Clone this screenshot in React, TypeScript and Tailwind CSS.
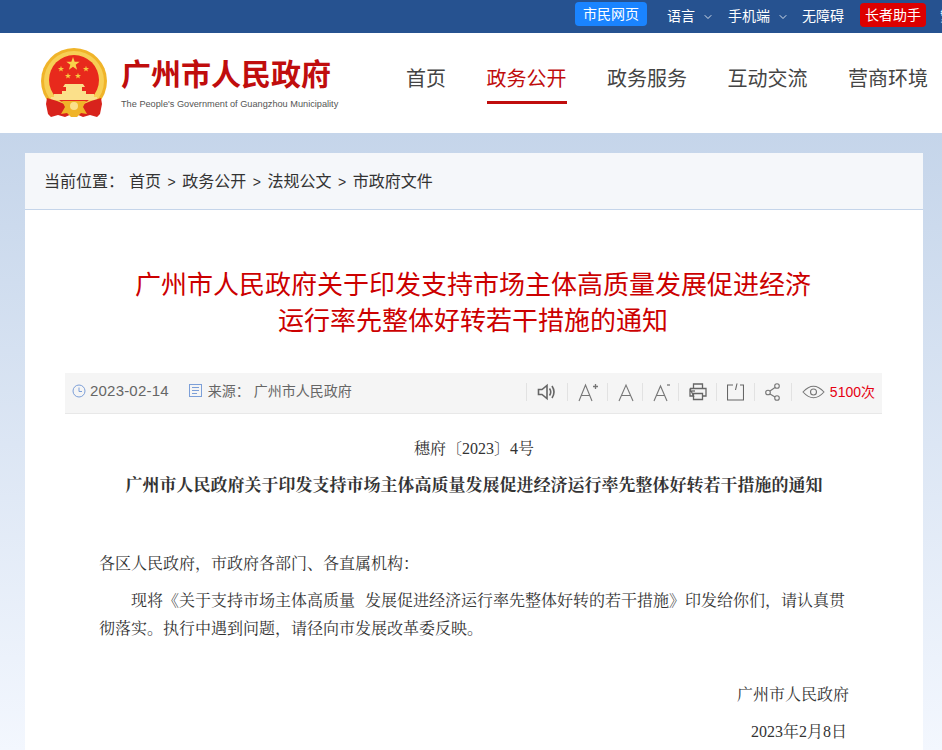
import React from "react";
import { ChevronDown } from "lucide-react";

const cjk = "font-['Liberation_Sans','Noto_Sans_CJK_SC',sans-serif]";
const song = "font-['Liberation_Serif','Noto_Serif_CJK_SC','Noto_Sans_CJK_SC',serif]";

function star(cx: number, cy: number, r: number) {
    const pts: string[] = [];
    for (let i = 0; i < 10; i++) {
        const rr = i % 2 === 0 ? r : r * 0.4;
        const a = (Math.PI / 5) * i - Math.PI / 2;
        pts.push(`${(cx + rr * Math.cos(a)).toFixed(2)},${(cy + rr * Math.sin(a)).toFixed(2)}`);
    }
    return pts.join(" ");
}

function Emblem() {
    return (
        <svg width="68" height="72" viewBox="0 0 68 72">
            {/* gold ring */}
            <circle cx="34" cy="33" r="33" fill="#f0b429" />
            <circle cx="34" cy="33" r="30" fill="#f7cf55" />
            <circle cx="34" cy="32" r="25" fill="#e8291c" />
            {/* stars */}
            <polygon points={star(33, 16, 7)} fill="#f8d24a" />
            <polygon points={star(21, 21, 3.2)} fill="#f6c93f" />
            <polygon points={star(46, 21, 3.2)} fill="#f6c93f" />
            <polygon points={star(28, 28, 3.2)} fill="#f6c93f" />
            <polygon points={star(38, 28, 3.2)} fill="#f6c93f" />
            {/* gate */}
            <path d="M25 36h18l2 3H23zM26 39h16v4H26zM22 43h24v3H22zM14 46h40v3H14zM11 49h46v3H11z" fill="#fbe08a" />
            {/* ribbons */}
            <path d="M7 50l10 3 12 5 3 8-7 3-7-2-7 2-3-3-2-10z" fill="#d8231c" />
            <path d="M61 50l-10 3-12 5-3 8 7 3 7-2 7 2 3-3 2-10z" fill="#d8231c" />
            <path d="M22 53h24l-3 6 4 7-6-1-4 4h-6l-4-4-6 1 4-7z" fill="#f0b429" />
            <circle cx="34" cy="58" r="4" fill="#fbe08a" />
        </svg>
    );
}

function Sep() {
    return <span className="w-px h-[18px] bg-[#e2e2e2]" />;
}

export default function App() {
    const nav = ["首页", "政务公开", "政务服务", "互动交流", "营商环境"];
    return (
        <div className={`${cjk} w-[942px] h-[750px] overflow-hidden bg-gradient-to-b from-[#c5d5ea] from-[133px] to-[#f3f7fe] to-[750px] text-[#333333]`}>
            {/* Top bar */}
            <div className="h-[33px] bg-[#265290] flex items-center pl-[575px] text-white text-sm whitespace-nowrap overflow-hidden">
                <span className="w-[72px] h-6 -mt-[5px] shrink-0 bg-[#1a84ff] rounded-sm flex items-center justify-center">市民网页</span>
                <span className="ml-5 -mt-[2px] shrink-0">语言</span>
                <ChevronDown size={12} className="ml-[7px] shrink-0 text-[#d5deea]" />
                <span className="ml-[14px] -mt-[2px] shrink-0">手机端</span>
                <ChevronDown size={12} className="ml-[7px] shrink-0 text-[#d5deea]" />
                <span className="ml-[13px] -mt-[2px] shrink-0">无障碍</span>
                <span className="ml-4 w-[66px] h-6 -mt-[3px] shrink-0 bg-[#dd0000] rounded-sm flex items-center justify-center">长者助手</span>
                <span className="ml-[14px] -mt-[2px] shrink-0">繁体</span>
            </div>

            {/* Header */}
            <div className="h-[100px] bg-white flex items-center whitespace-nowrap overflow-hidden">
                <div className="ml-[40px] mt-[1px] shrink-0">
                    <Emblem />
                </div>
                <div className="ml-[13px] w-[285px] shrink-0">
                    <div className="text-[30px] leading-[38px] font-bold text-[#c00d0d]">广州市人民政府</div>
                    <div className="text-[9.2px] leading-[14px] mt-[3px] text-[#555555] font-['Liberation_Sans',sans-serif]">The People's Government of Guangzhou Municipality</div>
                </div>
                <div className="flex gap-[40.500px] h-full shrink-0">
                    {nav.map((n) => (
                        <a key={n} className={`h-[37px] mt-[1px] pt-[30px] leading-[30px] text-xl box-content ${n === "政务公开" ? "text-[#c00d0d] border-b-[3px] border-[#c00d0d]" : "text-[#444444]"}`}>
                            {n}
                        </a>
                    ))}
                </div>
            </div>

            {/* Main card */}
            <div className="mt-5 ml-[25px] w-[898px] bg-white pb-10">
                <div className="h-[57px] bg-[#f5f7fa] border-b border-[#c5d5ea] pl-[19px] pt-px flex items-center text-base text-[#333333]">
                    <span className="mr-[5px]">当前位置：</span>
                    <span>首页</span>
                    <span className="mx-[6.5px] text-sm">&gt;</span>
                    <span>政务公开</span>
                    <span className="mx-[6.5px] text-sm">&gt;</span>
                    <span>法规公文</span>
                    <span className="mx-[6.5px] text-sm">&gt;</span>
                    <span>市政府文件</span>
                </div>

                <h1 className="mt-[57px] pr-[2px] text-center text-[26px] leading-[36px] text-[#cc0000]">
                    广州市人民政府关于印发支持市场主体高质量发展促进经济
                    <br />
                    运行率先整体好转若干措施的通知
                </h1>

                {/* Meta bar */}
                <div className="mt-[34px] ml-10 w-[817px] h-[41px] bg-[#f5f5f5] border-b border-[#e8e8e8] pb-[3px] flex items-center text-[#666666] whitespace-nowrap">
                    <svg width="14" height="14" viewBox="0 0 14 14" fill="none" stroke="#7c9fd8" strokeWidth="1" className="ml-[7px] -mt-[2px]">
                        <circle cx="7" cy="7" r="6" />
                        <path d="M7 3.500V7.500H10" />
                    </svg>
                    <span className="ml-[4px] text-[15px] tracking-[0.2px]">2023-02-14</span>
                    <svg width="13" height="13" viewBox="0 0 13 13" fill="none" stroke="#7c9fd8" strokeWidth="1" className="ml-[20px] -mt-[2px]">
                        <rect x="0.500" y="0.500" width="12" height="12" />
                        <path d="M3 3.500H10M3 6.500H10M3 9.500H8" />
                    </svg>
                    <span className="ml-[6px] -mt-px text-sm">来源：</span>
                    <span className="ml-[4px] -mt-px text-sm">广州市人民政府</span>
                    <div className="ml-auto flex items-center gap-[10px] text-[#777777]">
                        <Sep />
                        <svg width="20" height="18" viewBox="0 0 20 18" fill="none" stroke="#666666" strokeWidth="1.600">
                            <path d="M1.500 6.500H5L10 2.500V15.500L5 11.500H1.500Z" />
                            <path d="M12.500 5.500Q15 9 12.500 12.500M15 3Q19 9 15 15" />
                        </svg>
                        <Sep />
                        <svg width="20" height="20" viewBox="0 0 20 20" fill="none" stroke="#777777" strokeWidth="1.100" className="-mr-px">
                            <path d="M1 19L7.500 3 14 19M3.500 13.500H11.500" />
                            <path d="M15 4.500H20M17.500 2V7" strokeWidth="1.300" />
                        </svg>
                        <Sep />
                        <svg width="16" height="20" viewBox="0 0 16 20" fill="none" stroke="#777777" strokeWidth="1.100" className="-mr-[2px]">
                            <path d="M1 19L8 3 15 19M3.500 13.500H12.500" />
                        </svg>
                        <Sep />
                        <svg width="17" height="20" viewBox="0 0 17 20" fill="none" stroke="#777777" strokeWidth="1.100" className="-mr-[2px]">
                            <path d="M1 19L7.500 4 14 19M3.500 13.500H11.500" />
                            <path d="M14 3H17" strokeWidth="1.300" />
                        </svg>
                        <Sep />
                        <svg width="18" height="18" viewBox="0 0 18 18" fill="none" stroke="#666666" strokeWidth="1.300" className="-mr-px">
                            <path d="M4.500 5V1H13.500V5M1 5.500H17V13H13.500M4.500 13H1V5.500Z" />
                            <path d="M4.500 10.500H13.500V16.500H4.500Z" />
                            <path d="M3 8H6" />
                        </svg>
                        <Sep />
                        <svg width="17" height="18" viewBox="0 0 17 18" fill="none" stroke="#666666" strokeWidth="1.100">
                            <path d="M6 2H0.500V17H16.500V2H13" />
                            <path d="M8.500 7L10 0.500" />
                        </svg>
                        <Sep />
                        <svg width="16" height="18" viewBox="0 0 16 18" fill="none" stroke="#777777" strokeWidth="1.100">
                            <circle cx="12" cy="3" r="2.300" />
                            <circle cx="3" cy="9.500" r="2.300" />
                            <circle cx="12" cy="15" r="2.300" />
                            <path d="M10 4.500L5 8M5 11L10 14" />
                        </svg>
                        <Sep />
                        <svg width="23" height="14" viewBox="0 0 23 14" fill="none" stroke="#777777" strokeWidth="1.100">
                            <path d="M1 7Q11.500 -4.500 22 7Q11.500 18.500 1 7Z" />
                            <circle cx="11.500" cy="7" r="3" />
                        </svg>
                        <span className="-ml-[5px] mr-[7px] text-sm text-[#e60012]">5100次</span>
                    </div>
                </div>

                {/* Article */}
                <div className={`px-[74px] text-base text-[#333333] ${song}`}>
                    <p className="mt-[23px] text-center leading-[24px]">穗府〔2023〕4号</p>
                    <p className="mt-[13px] -mx-4 text-center text-[17px] leading-[24px] font-bold">广州市人民政府关于印发支持市场主体高质量发展促进经济运行率先整体好转若干措施的通知</p>
                    <p className="mt-[52px] leading-[28px]">各区人民政府，市政府各部门、各直属机构：</p>
                    <p className="mt-[9px] -mr-[3px] leading-[28px] indent-8 [word-spacing:6px]">
                        现将《关于支持市场主体高质量 发展促进经济运行率先整体好转的若干措施》印发给你们，请认真贯彻落实。执行中遇到问题，请径向市发展改革委反映。
                    </p>
                    <p className="mt-[38px] leading-[28px] text-right">广州市人民政府</p>
                    <p className="mt-[9px] pr-[2px] leading-[28px] text-right">2023年2月8日</p>
                </div>
            </div>
        </div>
    );
}
